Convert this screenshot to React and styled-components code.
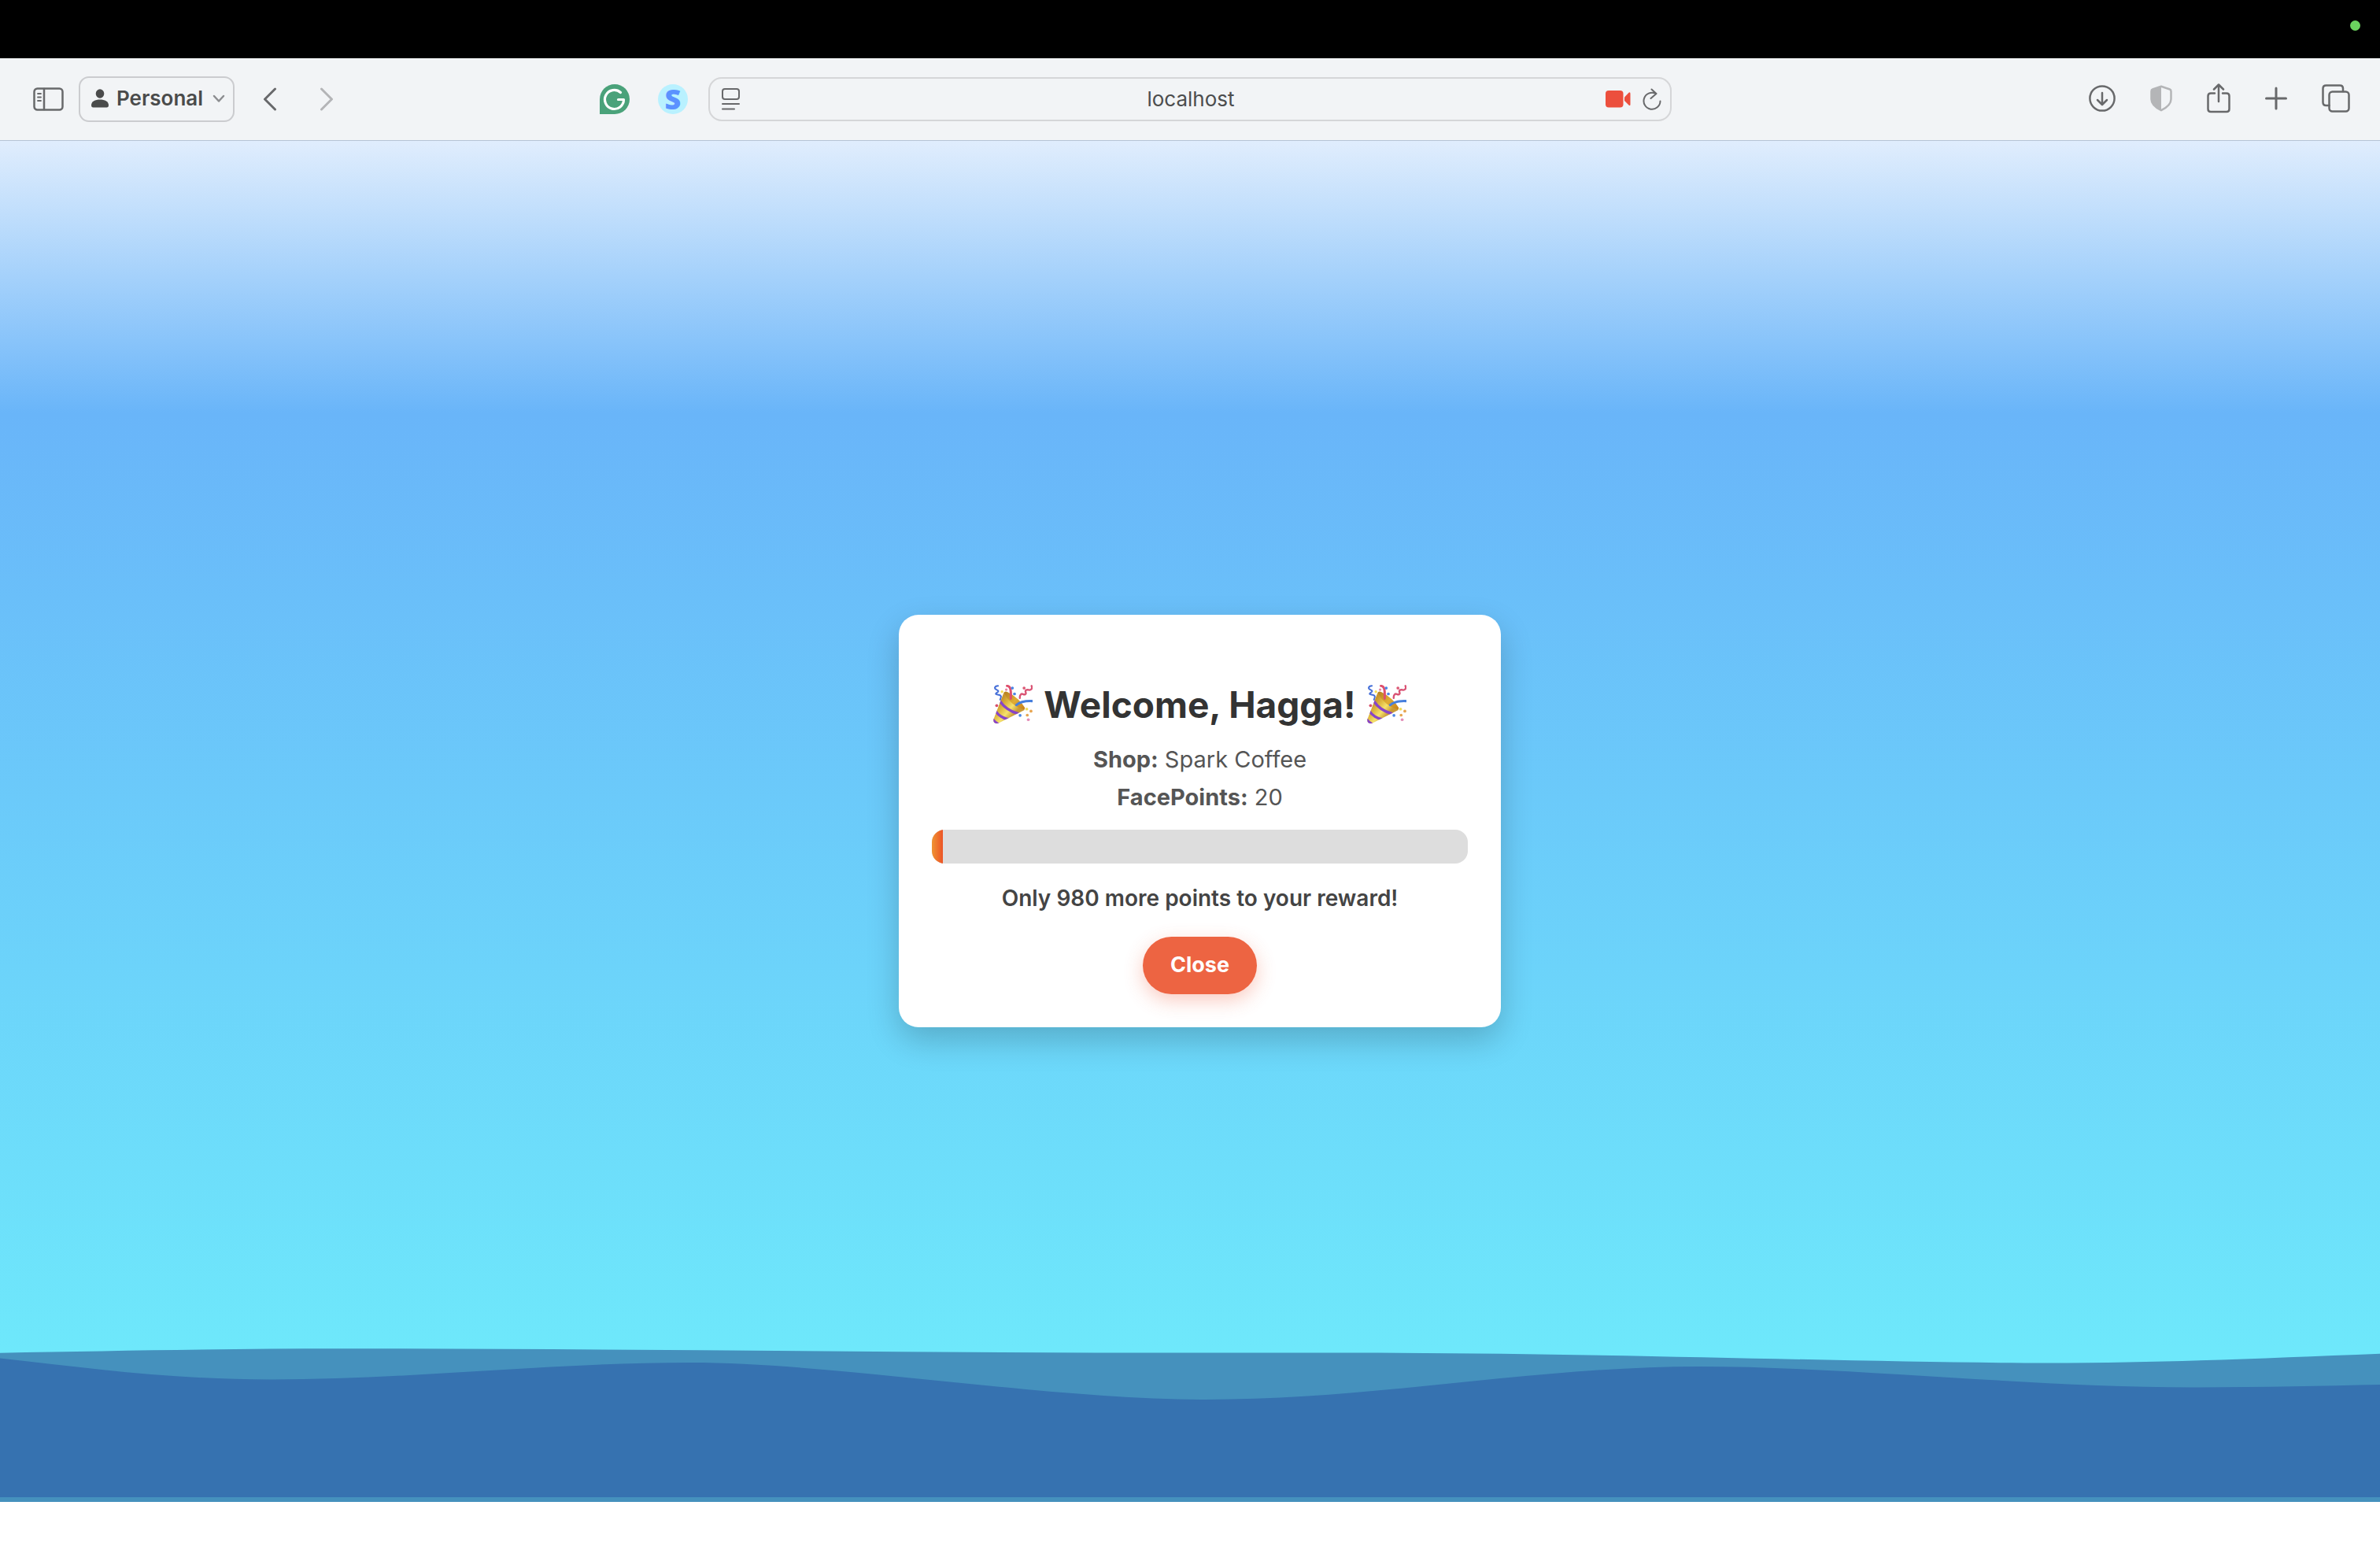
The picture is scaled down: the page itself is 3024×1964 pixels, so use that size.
import React from "react";
import styled, { createGlobalStyle, css } from "styled-components";

const GlobalStyle = createGlobalStyle`
  *, *::before, *::after { box-sizing: border-box; }
  body {
    margin: 0;
    background: #fff;
    font-family: Inter, "Liberation Sans", sans-serif;
    -webkit-font-smoothing: antialiased;
  }
  h1, p { margin: 0; }
  button { font-family: inherit; cursor: pointer; }
`;

const Screen = styled.div`
  display: flex;
  flex-direction: column;
  min-height: 100vh;
  padding-bottom: 56px;
`;

const MenuBar = styled.div`
  display: flex;
  justify-content: flex-end;
  height: 74px;
  padding: 26px 25px;
  background: #000;
`;

const CameraDot = styled.span`
  width: 13px;
  height: 13px;
  border-radius: 50%;
  background: #6bd45f;
`;

const Toolbar = styled.header`
  display: grid;
  grid-template-columns: 25fr 34fr 25fr;
  align-items: center;
  height: 105px;
  background: #f2f4f6;
  border-bottom: 1px solid #b5c4d6;
`;

const ToolGroup = styled.div`
  display: flex;
  align-items: center;
  justify-content: ${(p) => (p.$end ? "flex-end" : "flex-start")};
  gap: ${(p) => p.$gap}px;
`;

const LeadingTools = styled.div`
  display: flex;
  align-items: center;
  justify-content: space-between;
  padding: 0 26px 0 42px;
`;

const TrailingTools = styled(ToolGroup)`
  padding: 0 38px 2px 0;
`;

const IconButton = styled.button`
  display: flex;
  flex: none;
  padding: 0;
  border: 0;
  background: none;
  color: ${(p) => (p.$dim ? "#b4b5b7" : "#68696b")};
`;

const ProfileButton = styled.button`
  display: flex;
  align-items: center;
  height: 58px;
  padding: 0 10px 2px 14px;
  border: 2px solid #cbcccf;
  border-radius: 13px;
  background: none;
  color: #4a4b4b;
  font-size: 26px;
  font-weight: 600;
  line-height: 32px;
`;

const ProfileName = styled.span`
  padding: 0 12px 0 10px;
`;

const ExtensionS = styled(IconButton)`
  align-items: center;
  justify-content: center;
  width: 38px;
  height: 38px;
  border-radius: 50%;
  background: #b9f1ff;
  color: #5b92ff;
  font-family: "Open Sans", "Noto Sans", sans-serif;
  font-size: 36px;
  font-weight: 800;
  line-height: 38px;
`;

const AddressBar = styled.div`
  display: flex;
  align-items: center;
  height: 56px;
  padding: 0 11px 0 15px;
  border: 2px solid #d5d6d8;
  border-radius: 17px;
`;

const AddressInput = styled.input`
  flex: 1;
  min-width: 0;
  padding: 0 0 0 46px;
  border: 0;
  background: none;
  color: #4c4d4e;
  font-family: inherit;
  font-size: 26px;
  line-height: 32px;
  text-align: center;
  outline: none;
`;

const Stage = styled.main`
  display: grid;
  flex: 1;
  background: linear-gradient(
    to bottom,
    #e0edfd 0%,
    #69b5f9 20%,
    #6ee8fb 89%,
    #6eecfb 100%
  );
`;

const layer = css`
  grid-area: 1 / 1;
`;

const Waves = styled.svg`
  ${layer}
  display: block;
  align-self: end;
  width: 100%;
  height: 196px;
`;

const CardArea = styled.div`
  ${layer}
  z-index: 1;
  display: flex;
  align-items: center;
  justify-content: center;
  padding: 0 0 2px 25px;
`;

const Card = styled.section`
  display: flex;
  flex-direction: column;
  align-items: center;
  width: 765px;
  padding: 82px 42px 42px;
  border-radius: 25px;
  background: #fff;
  box-shadow: 0 16px 42px rgba(0, 0, 0, 0.2);
  text-align: center;
`;

const Title = styled.h1`
  display: flex;
  align-items: center;
  gap: 14px;
  margin-bottom: 14px;
  color: #333;
  font-size: 46px;
  font-weight: 700;
  line-height: 64px;
  white-space: nowrap;
`;

const Detail = styled.p`
  color: #555;
  font-size: 29px;
  line-height: 48px;
`;

const Progress = styled.div`
  width: 100%;
  height: 43px;
  margin-top: 17px;
  border-radius: 16px;
  background: #ddd;
  overflow: hidden;
`;

const ProgressFill = styled.div`
  height: 100%;
  background: linear-gradient(90deg, #f09433, #ec5426);
`;

const Message = styled.p`
  margin: 24px 0 29px;
  color: #444;
  font-size: 28px;
  font-weight: 600;
  line-height: 40px;
`;

const CloseButton = styled.button`
  height: 73px;
  padding: 0 35px;
  border: 0;
  border-radius: 37px;
  background: #ed6442;
  box-shadow: 0 8px 24px rgba(237, 84, 50, 0.3);
  color: #fff;
  font-size: 27px;
  font-weight: 700;
  line-height: 40px;
`;

const Icon = ({ w, h, children, sw = 3 }) => (
  <svg
    width={w}
    height={h}
    viewBox={`0 0 ${w} ${h}`}
    fill="none"
    stroke="currentColor"
    strokeWidth={sw}
    strokeLinecap="round"
    strokeLinejoin="round"
    aria-hidden="true"
  >
    {children}
  </svg>
);

const SidebarIcon = () => (
  <Icon w={39} h={30} sw={2.5}>
    <rect x="1.500" y="1.500" width="36" height="27" rx="4" />
    <path d="M14 2v26" />
    <path d="M6 8h4M6 12.500h4M6 17h4" strokeWidth="1.800" />
  </Icon>
);

const PersonIcon = () => (
  <svg width="22" height="24" viewBox="0 0 22 24" fill="currentColor" aria-hidden="true">
    <ellipse cx="11" cy="6" rx="5.300" ry="5.800" />
    <path d="M0 20.500C0 16 5 13.500 11 13.500S22 16 22 20.500C22 22.500 21.300 23.500 19.500 23.500H2.500C.7 23.500 0 22.500 0 20.500Z" />
  </svg>
);

const ChevronDown = () => (
  <svg width="16" height="12" viewBox="0 0 16 12" fill="none" stroke="#8c8d90" strokeWidth="2.500" strokeLinecap="round" strokeLinejoin="round" aria-hidden="true">
    <path d="M2 3l6 6.500L14 3" />
  </svg>
);

const Party = () => (
  <svg width="50" height="50" viewBox="0 0 148 148" fill="none" strokeLinecap="round" role="img" aria-label="🎉">
    <defs>
      <linearGradient id="cone" x1="20" y1="70" x2="75" y2="115" gradientUnits="userSpaceOnUse">
        <stop offset="0" stopColor="#c9952c" />
        <stop offset=".35" stopColor="#e2bd45" />
        <stop offset=".65" stopColor="#f6e26c" />
        <stop offset="1" stopColor="#c99a36" />
      </linearGradient>
      <linearGradient id="mouth" x1="45" y1="30" x2="115" y2="92" gradientUnits="userSpaceOnUse">
        <stop offset="0" stopColor="#b98420" />
        <stop offset=".5" stopColor="#e0ad35" />
        <stop offset="1" stopColor="#c98118" />
      </linearGradient>
      <clipPath id="coneClip">
        <path d="M39 31L1 130Q-1 148 18 145L119 94Q80 78 39 31Z" />
      </clipPath>
    </defs>
    <path d="M18 4C4 5 3 14 12 18s10 6 1 12 2 6 9 8 10 4 4 18" stroke="#456fd8" strokeWidth="6" />
    <path d="M39 31L1 130Q-1 148 18 145L119 94Q80 78 39 31Z" fill="url(#cone)" />
    <g clipPath="url(#coneClip)" stroke="#8845c8" strokeWidth="10">
      <path d="M24 60Q48 96 92 108" />
      <path d="M8 98Q26 124 58 130" />
      <path d="M-6 124Q4 140 22 150" />
    </g>
    <path d="M39 31Q43 22 53 27Q95 48 119 86Q121 94 112 92Q70 80 39 31Z" fill="url(#mouth)" />
    <path d="M52 4C67 5 67 24 66 52" stroke="#df4f6d" strokeWidth="9" />
    <path d="M87 76C103 62 122 60 146 61" stroke="#477fdd" strokeWidth="9" />
    <path d="M144 4C149 15 141 21 133 19S119 21 122 28s-3 10-10 7-13 3-12 15" stroke="#d95374" strokeWidth="7" />
    <g>
      <circle cx="72" cy="12" r="5.500" fill="#4b86e6" />
      <circle cx="80" cy="34" r="5.500" fill="#4b86e6" />
      <circle cx="101" cy="115" r="5.500" fill="#4b86e6" />
      <circle cx="49" cy="18" r="5" fill="#e889a5" />
      <circle cx="132" cy="131" r="5.500" fill="#e48eb8" />
      <circle cx="116" cy="12" r="5.500" fill="#dc5b77" />
      <circle cx="13" cy="78" r="5.500" fill="#d8506c" />
      <circle cx="33" cy="26" r="5" fill="#f5df57" />
      <circle cx="126" cy="91" r="5.500" fill="#f3dc5b" />
      <circle cx="142" cy="99" r="5.500" fill="#e7a550" />
      <circle cx="128" cy="114" r="5.500" fill="#e7a550" />
    </g>
  </svg>
);

const points = 20;
const goal = 1000;

export default function App() {
  return (
    <Screen>
      <GlobalStyle />
      <MenuBar>
        <CameraDot />
      </MenuBar>
      <Toolbar>
        <LeadingTools>
          <ToolGroup $gap={36}>
            <ToolGroup $gap={19}>
              <IconButton aria-label="Show sidebar">
                <SidebarIcon />
              </IconButton>
              <ProfileButton>
                <PersonIcon />
                <ProfileName>Personal</ProfileName>
                <ChevronDown />
              </ProfileButton>
            </ToolGroup>
            <ToolGroup $gap={54}>
              <IconButton aria-label="Back">
                <Icon w={18} h={30}>
                  <path d="M15.500 2L2.500 15l13 13" />
                </Icon>
              </IconButton>
              <IconButton aria-label="Forward" $dim>
                <Icon w={18} h={30}>
                  <path d="M2.500 2l13 13-13 13" />
                </Icon>
              </IconButton>
            </ToolGroup>
          </ToolGroup>
          <ToolGroup $gap={36}>
            <IconButton aria-label="Grammarly">
              <svg width="38" height="38" viewBox="0 0 38 38" fill="none">
                <path d="M0 38V19A19 19 0 1 1 19 38Z" fill="#4aa27a" />
                <path d="M26.500 10.500A12 12 0 1 0 30.500 19.500H23.500" stroke="#fff" strokeWidth="3.200" strokeLinecap="round" strokeLinejoin="round" />
              </svg>
            </IconButton>
            <ExtensionS>S</ExtensionS>
          </ToolGroup>
        </LeadingTools>

        <AddressBar>
          <IconButton aria-label="Page menu">
            <Icon w={23} h={28} sw={2}>
              <rect x="1" y="1" width="21" height="13" rx="3" />
              <path d="M1 20h21M1 26.500h15" />
            </Icon>
          </IconButton>
          <AddressInput aria-label="Address" defaultValue="localhost" />
          <ToolGroup $gap={15}>
            <IconButton aria-label="Camera in use">
              <svg width="32" height="22" viewBox="0 0 32 22" fill="#ec4f3d">
                <rect width="22.500" height="21.500" rx="4" />
                <path d="M24 8.500L29.500 2.800Q31.500 1.500 31.500 4V17.500Q31.500 20 29.500 18.500L24 13Z" />
              </svg>
            </IconButton>
            <IconButton aria-label="Reload">
              <Icon w={24} h={28} sw={2}>
                <path d="M22.500 16.500A10.500 10.500 0 1 1 16.500 6.800M11.500 1.500l6 5.500-7 6" />
              </Icon>
            </IconButton>
          </ToolGroup>
        </AddressBar>

        <TrailingTools $end $gap={44}>
          <IconButton aria-label="Downloads">
            <Icon w={34} h={34} sw={2.5}>
              <circle cx="17" cy="17" r="15.600" />
              <path d="M17 10v14.500M11 19l6 6 6-6" />
            </Icon>
          </IconButton>
          <IconButton aria-label="Privacy report" $dim>
            <Icon w={28} h={34} sw={2.5}>
              <path d="M14 1.800L25 5.500Q26.500 6 26.500 8V18Q26.500 26 14 32.200Q1.500 26 1.500 18V8Q1.500 6 3 5.500Z" />
              <path d="M14 1.800V32.200Q1.500 26 1.500 18V8Q1.500 6 3 5.500Z" fill="currentColor" stroke="none" />
            </Icon>
          </IconButton>
          <IconButton aria-label="Share">
            <Icon w={30} h={38} sw={2.5}>
              <path d="M10 12.500H5Q1.500 12.500 1.500 16V32.500Q1.500 36 5 36H25Q28.500 36 28.500 32.500V16Q28.500 12.500 25 12.500H20M15 23V2M9 7.500l6-6 6 6" />
            </Icon>
          </IconButton>
          <IconButton aria-label="New tab">
            <Icon w={28} h={34}>
              <path d="M14 4v26M1.500 17h25" />
            </Icon>
          </IconButton>
          <IconButton aria-label="Tab overview">
            <Icon w={36} h={36} sw={2.5}>
              <rect x="9.500" y="9.500" width="25" height="25" rx="4" />
              <path d="M9.500 27H5.500Q1.500 27 1.500 23V5.500Q1.500 1.500 5.500 1.500H23Q27 1.500 27 5.500V9" />
            </Icon>
          </IconButton>
        </TrailingTools>
      </Toolbar>

      <Stage>
        <Waves viewBox="0 0 3024 196" preserveAspectRatio="none" aria-hidden="true">
          <path
            fill="#4591bd"
            d="M0 6.700C150 4 290 1.300 434 1.300C800 1.300 1150 6.600 1512 6.600H1720C2050 6.600 2380 19.500 2602 19.500C2760 19.500 2880 13 3024 7.700V196H0Z"
          />
          <path
            fill="#3672b0"
            d="M0 13.500C120 27 220 40.500 345 40.500C520 40.500 700 19 877 19C1060 19 1330 66 1532 66C1750 66 1950 24 2158 24C2350 24 2580 50.500 2785 50.500C2870 50.500 2950 48.500 3024 47V190H0Z"
          />
        </Waves>
        <CardArea>
          <Card aria-labelledby="welcome">
            <Title id="welcome">
              <Party />
              Welcome, Hagga!
              <Party />
            </Title>
            <Detail>
              <strong>Shop:</strong> Spark Coffee
            </Detail>
            <Detail>
              <strong>FacePoints:</strong> {points}
            </Detail>
            <Progress role="progressbar" aria-valuenow={points} aria-valuemin={0} aria-valuemax={goal} aria-label="FacePoints">
              <ProgressFill style={{ width: `${(points / goal) * 100}%` }} />
            </Progress>
            <Message>Only {goal - points} more points to your reward!</Message>
            <CloseButton>Close</CloseButton>
          </Card>
        </CardArea>
      </Stage>
    </Screen>
  );
}
